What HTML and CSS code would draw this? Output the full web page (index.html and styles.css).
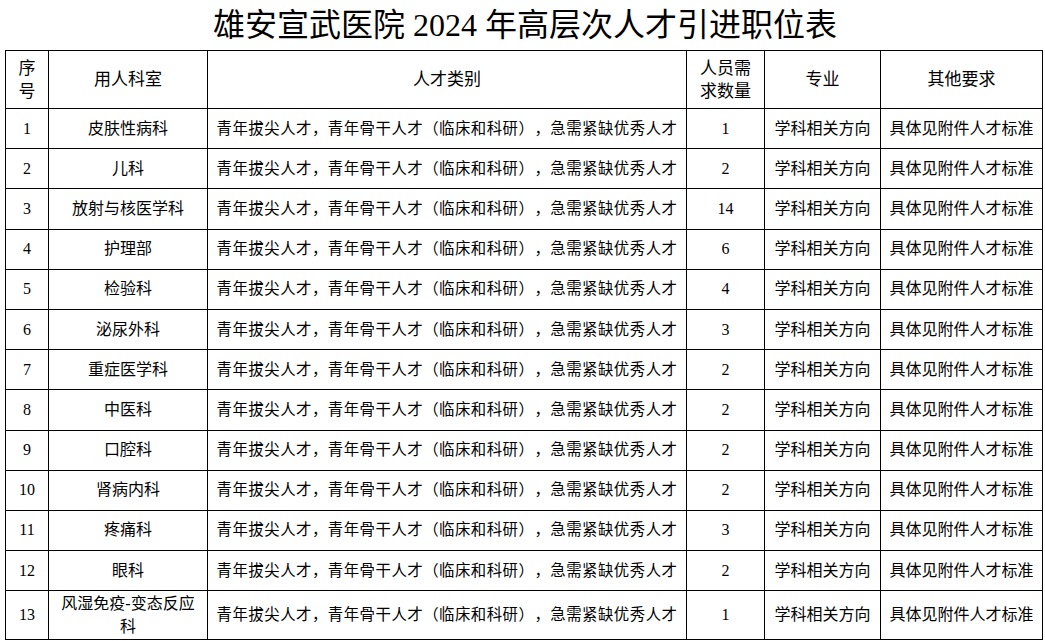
FILE: index.html
```html
<!DOCTYPE html>
<html lang="zh">
<head>
<meta charset="utf-8">
<title>雄安宣武医院2024年高层次人才引进职位表</title>
<link rel="stylesheet" href="styles.css">
</head>
<body>
<div class="page">
  <h1 class="title">雄安宣武医院 2024 年高层次人才引进职位表</h1>
  <table class="jobs">
    <colgroup>
      <col class="c-no">
      <col class="c-dept">
      <col class="c-type">
      <col class="c-num">
      <col class="c-major">
      <col class="c-other">
    </colgroup>
    <thead>
      <tr class="head">
        <th>序<br>号</th>
        <th>用人科室</th>
        <th>人才类别</th>
        <th>人员需<br>求数量</th>
        <th>专业</th>
        <th>其他要求</th>
      </tr>
    </thead>
    <tbody>
      <tr><td class="num">1</td><td>皮肤性病科</td><td class="type">青年拔尖人才，青年骨干人才（临床和科研），急需紧缺优秀人才</td><td class="num">1</td><td>学科相关方向</td><td>具体见附件人才标准</td></tr>
      <tr><td class="num">2</td><td>儿科</td><td class="type">青年拔尖人才，青年骨干人才（临床和科研），急需紧缺优秀人才</td><td class="num">2</td><td>学科相关方向</td><td>具体见附件人才标准</td></tr>
      <tr><td class="num">3</td><td>放射与核医学科</td><td class="type">青年拔尖人才，青年骨干人才（临床和科研），急需紧缺优秀人才</td><td class="num">14</td><td>学科相关方向</td><td>具体见附件人才标准</td></tr>
      <tr><td class="num">4</td><td>护理部</td><td class="type">青年拔尖人才，青年骨干人才（临床和科研），急需紧缺优秀人才</td><td class="num">6</td><td>学科相关方向</td><td>具体见附件人才标准</td></tr>
      <tr><td class="num">5</td><td>检验科</td><td class="type">青年拔尖人才，青年骨干人才（临床和科研），急需紧缺优秀人才</td><td class="num">4</td><td>学科相关方向</td><td>具体见附件人才标准</td></tr>
      <tr><td class="num">6</td><td>泌尿外科</td><td class="type">青年拔尖人才，青年骨干人才（临床和科研），急需紧缺优秀人才</td><td class="num">3</td><td>学科相关方向</td><td>具体见附件人才标准</td></tr>
      <tr><td class="num">7</td><td>重症医学科</td><td class="type">青年拔尖人才，青年骨干人才（临床和科研），急需紧缺优秀人才</td><td class="num">2</td><td>学科相关方向</td><td>具体见附件人才标准</td></tr>
      <tr><td class="num">8</td><td>中医科</td><td class="type">青年拔尖人才，青年骨干人才（临床和科研），急需紧缺优秀人才</td><td class="num">2</td><td>学科相关方向</td><td>具体见附件人才标准</td></tr>
      <tr><td class="num">9</td><td>口腔科</td><td class="type">青年拔尖人才，青年骨干人才（临床和科研），急需紧缺优秀人才</td><td class="num">2</td><td>学科相关方向</td><td>具体见附件人才标准</td></tr>
      <tr><td class="num">10</td><td>肾病内科</td><td class="type">青年拔尖人才，青年骨干人才（临床和科研），急需紧缺优秀人才</td><td class="num">2</td><td>学科相关方向</td><td>具体见附件人才标准</td></tr>
      <tr><td class="num">11</td><td>疼痛科</td><td class="type">青年拔尖人才，青年骨干人才（临床和科研），急需紧缺优秀人才</td><td class="num">3</td><td>学科相关方向</td><td>具体见附件人才标准</td></tr>
      <tr><td class="num">12</td><td>眼科</td><td class="type">青年拔尖人才，青年骨干人才（临床和科研），急需紧缺优秀人才</td><td class="num">2</td><td>学科相关方向</td><td>具体见附件人才标准</td></tr>
      <tr class="tall"><td class="num">13</td><td class="wrap">风湿免疫-变态反应<br>科</td><td class="type">青年拔尖人才，青年骨干人才（临床和科研），急需紧缺优秀人才</td><td class="num">1</td><td>学科相关方向</td><td>具体见附件人才标准</td></tr>
    </tbody>
  </table>
</div>
</body>
</html>
```

FILE: styles.css
```css
html, body {
  margin: 0;
  padding: 0;
  background: #ffffff;
}

body {
  font-family: "Liberation Serif", "Noto Sans CJK SC", serif;
  color: #000000;
  text-spacing-trim: space-all;
}

.page {
  width: 1045px;
  padding-left: 5px;
  box-sizing: border-box;
}

.title {
  margin: 0;
  height: 50px;
  line-height: 50px;
  font-size: 32px;
  font-weight: normal;
  text-align: center;
  letter-spacing: 0;
}

.jobs {
  border-collapse: collapse;
  table-layout: fixed;
  width: 1037px;
}

.c-no { width: 43px; }
.c-dept { width: 159px; }
.c-type { width: 479px; }
.c-num { width: 78px; }
.c-major { width: 116px; }
.c-other { width: 162px; }

.jobs th,
.jobs td {
  border: 1.5px solid #000000;
  padding: 0;
  text-align: center;
  vertical-align: middle;
  font-weight: normal;
  white-space: nowrap;
  text-spacing-trim: space-all;
}

.jobs th {
  font-size: 17px;
  line-height: 23px;
}

.jobs .head {
  height: 58px;
}

.jobs td {
  font-size: 16px;
  line-height: 20px;
}

.jobs tbody tr {
  height: 40.2px;
}

.jobs tbody tr.tall {
  height: 49px;
}

.jobs td.type {
  font-size: 15.4px;
  letter-spacing: 0.5px;
}

.jobs td.num {
  font-size: 16px;
}

.jobs td.wrap {
  line-height: 23px;
}
```
